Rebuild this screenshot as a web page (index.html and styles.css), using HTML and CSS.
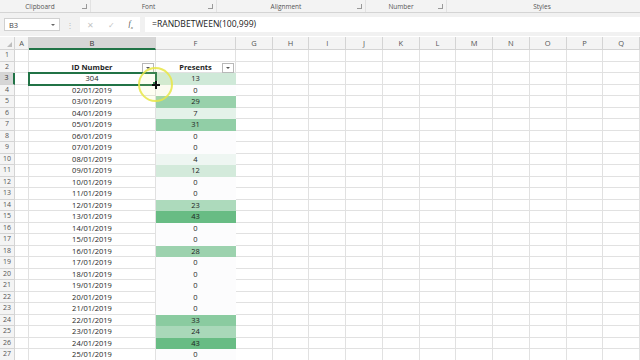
FILE: index.html
```html
<!DOCTYPE html>
<html lang="en">
<head>
    <meta charset="UTF-8">
    <title>Presents - Excel</title>
    <link rel="stylesheet" href="styles.css">
</head>
<body>
    <div class="ribbon">
        <div class="group g-clip"><span class="glabel">Clipboard</span><span class="launcher"></span></div>
        <div class="group g-font"><span class="glabel">Font</span><span class="launcher"></span></div>
        <div class="group g-align"><span class="glabel">Alignment</span><span class="launcher"></span></div>
        <div class="group g-num"><span class="glabel">Number</span><span class="launcher"></span></div>
        <div class="group g-styles"><span class="glabel">Styles</span></div>
    </div>

    <div class="formula-bar">
        <div class="name-box">B3<span class="nb-arrow"></span></div>
        <div class="fb-dots">⋮</div>
        <div class="fb-icons">
            <span class="fb-cancel">✕</span>
            <span class="fb-enter">✓</span>
            <span class="fb-fx">f<sub>x</sub></span>
        </div>
        <div class="fb-input">=RANDBETWEEN(100,999)</div>
    </div>

    <div class="sheet" id="sheet"></div>

    <div class="cursor-ring"></div>
    <div class="cursor-cross"></div>

    <script>
        const letters = ['A', 'B', 'F', 'G', 'H', 'I', 'J', 'K', 'L', 'M', 'N', 'O', 'P', 'Q'];
        const presents = [13, 0, 29, 7, 31, 0, 0, 4, 12, 0, 0, 23, 43, 0, 0, 28, 0, 0, 0, 0, 0, 33, 24, 43, 0];
        const maxVal = 43;
        const sheet = document.getElementById('sheet');

        function cell(cls, text) {
            const el = document.createElement('div');
            el.className = 'cell ' + cls;
            if (text !== undefined) el.textContent = text;
            sheet.appendChild(el);
            return el;
        }

        // white -> green colour scale
        function scale(v) {
            const t = v / maxVal;
            const from = [252, 252, 253];
            const to = [104, 188, 132];
            const c = from.map((f, i) => Math.round(f + (to[i] - f) * t));
            return `rgb(${c[0]},${c[1]},${c[2]})`;
        }

        function pad(n) {
            return n < 10 ? '0' + n : '' + n;
        }

        // header row
        cell('corner');
        letters.forEach(l => {
            cell('col-head' + (l === 'B' ? ' active' : ''), l);
        });

        for (let r = 1; r <= 27; r++) {
            cell('row-head' + (r === 3 ? ' active' : ''), r);
            letters.forEach(l => {
                const c = cell('c-' + l);
                if (r === 2 && (l === 'B' || l === 'F')) {
                    c.classList.add('title');
                    c.innerHTML = (l === 'B' ? 'ID Number' : 'Presents') + '<span class="filter"></span>';
                }
                if (r >= 3 && l === 'B') {
                    c.textContent = r === 3 ? '304' : pad(r - 2) + '/01/2019';
                    if (r === 3) c.classList.add('selected');
                }
                if (r >= 3 && l === 'F') {
                    const v = presents[r - 3];
                    const bg = scale(v);
                    c.textContent = v;
                    c.style.background = bg;
                    c.style.borderColor = bg;
                }
            });
        }
    </script>
</body>
</html>
```

FILE: styles.css
```css
body {
    margin: 0;
    width: 640px;
    height: 360px;
    overflow: hidden;
    background: #fff;
    font-family: "Open Sans", "Liberation Sans", sans-serif;
    color: #1e1e1e;
}

/* ribbon group labels */
.ribbon {
    display: flex;
    height: 12px;
    background: #f3f3f3;
    border-bottom: 1px solid #d4d4d4;
    font-size: 6.5px;
    color: #555;
}
.group {
    display: flex;
    align-items: center;
    border-right: 1px solid #e2e2e2;
    padding-right: 3px;
}
.glabel {
    flex: 1;
    text-align: center;
}
.launcher {
    width: 4px;
    height: 4px;
    border-right: 1px solid #999;
    border-bottom: 1px solid #999;
    margin-left: 2px;
}
.g-clip { width: 87px; }
.g-font { width: 122px; }
.g-align { width: 145px; }
.g-num { width: 77px; }
.g-styles { flex: 1; border-right: none; }

/* formula bar */
.formula-bar {
    display: flex;
    align-items: center;
    height: 23px;
    background: #f1f1f1;
    padding-left: 4px;
    box-sizing: border-box;
}
.name-box {
    position: relative;
    width: 56px;
    height: 13px;
    background: #fff;
    border: 1px solid #d0d0d0;
    font-size: 7.5px;
    line-height: 12px;
    padding-left: 4px;
    box-sizing: border-box;
    color: #444;
}
.nb-arrow {
    position: absolute;
    right: 4px;
    top: 5px;
    border-left: 2px solid transparent;
    border-right: 2px solid transparent;
    border-top: 2px solid #666;
}
.fb-dots {
    width: 20px;
    text-align: center;
    font-size: 8px;
    color: #bbb;
}
.fb-icons {
    display: flex;
    align-items: center;
    justify-content: space-around;
    width: 60px;
    height: 15px;
    background: #fff;
    font-size: 7.5px;
    color: #c4c4c4;
}
.fb-fx {
    font-family: "Liberation Serif", serif;
    font-style: italic;
    color: #555;
    font-size: 8px;
}
.fb-fx sub {
    font-size: 5px;
}
.fb-input {
    flex: 1;
    height: 15px;
    margin-left: 5px;
    background: #fff;
    font-size: 8.6px;
    line-height: 15px;
    padding-left: 7px;
    color: #222;
}

/* worksheet grid */
.sheet {
    display: grid;
    grid-template-columns: 15px 14px 127px 80px repeat(11, 1fr);
    grid-template-rows: 13px repeat(27, 11.5px);
    margin-top: 1px;
}
.cell {
    position: relative;
    box-sizing: border-box;
    border-right: 1px solid #e1e1e1;
    border-bottom: 1px solid #e1e1e1;
    font-size: 7.5px;
    line-height: 10.5px;
    text-align: center;
    white-space: nowrap;
}
.corner,
.col-head,
.row-head {
    background: #f4f4f4;
    border-color: #d4d4d4;
    color: #555;
}
.row-head {
    font-size: 7px;
}
.col-head {
    line-height: 12px;
    font-size: 7.5px;
}
.corner::after {
    content: "";
    position: absolute;
    right: 2px;
    bottom: 2px;
    border-left: 5px solid transparent;
    border-bottom: 5px solid #bdbdbd;
}
.col-head.active {
    background: #d6d6d6;
    border-bottom: 2px solid #217346;
    color: #333;
}
.row-head.active {
    background: #d6d6d6;
    border-right: 2px solid #217346;
    color: #333;
}
.title {
    font-weight: bold;
}
.filter {
    position: absolute;
    right: 1px;
    top: 1px;
    width: 10px;
    height: 8px;
    background: #fff;
    border: 1px solid #b8b8b8;
}
.filter::after {
    content: "";
    position: absolute;
    left: 3px;
    top: 3px;
    border-left: 2px solid transparent;
    border-right: 2px solid transparent;
    border-top: 2px solid #555;
}
.selected {
    outline: 2px solid #217346;
    outline-offset: -1px;
    z-index: 2;
}
.selected::after {
    content: "";
    position: absolute;
    right: -3px;
    bottom: -3px;
    width: 4px;
    height: 4px;
    background: #217346;
    border: 1px solid #fff;
}

/* presenter's cursor highlight */
.cursor-ring {
    position: absolute;
    left: 138px;
    top: 67px;
    width: 35px;
    height: 35px;
    box-sizing: border-box;
    border: 2.5px solid rgba(232, 230, 70, 0.85);
    border-radius: 50%;
    background: rgba(250, 250, 150, 0.12);
    z-index: 5;
}
.cursor-cross {
    position: absolute;
    left: 152px;
    top: 81px;
    width: 8px;
    height: 8px;
    z-index: 6;
    background:
        linear-gradient(#111, #111) center / 8px 2px no-repeat,
        linear-gradient(#111, #111) center / 2px 8px no-repeat;
}
```
